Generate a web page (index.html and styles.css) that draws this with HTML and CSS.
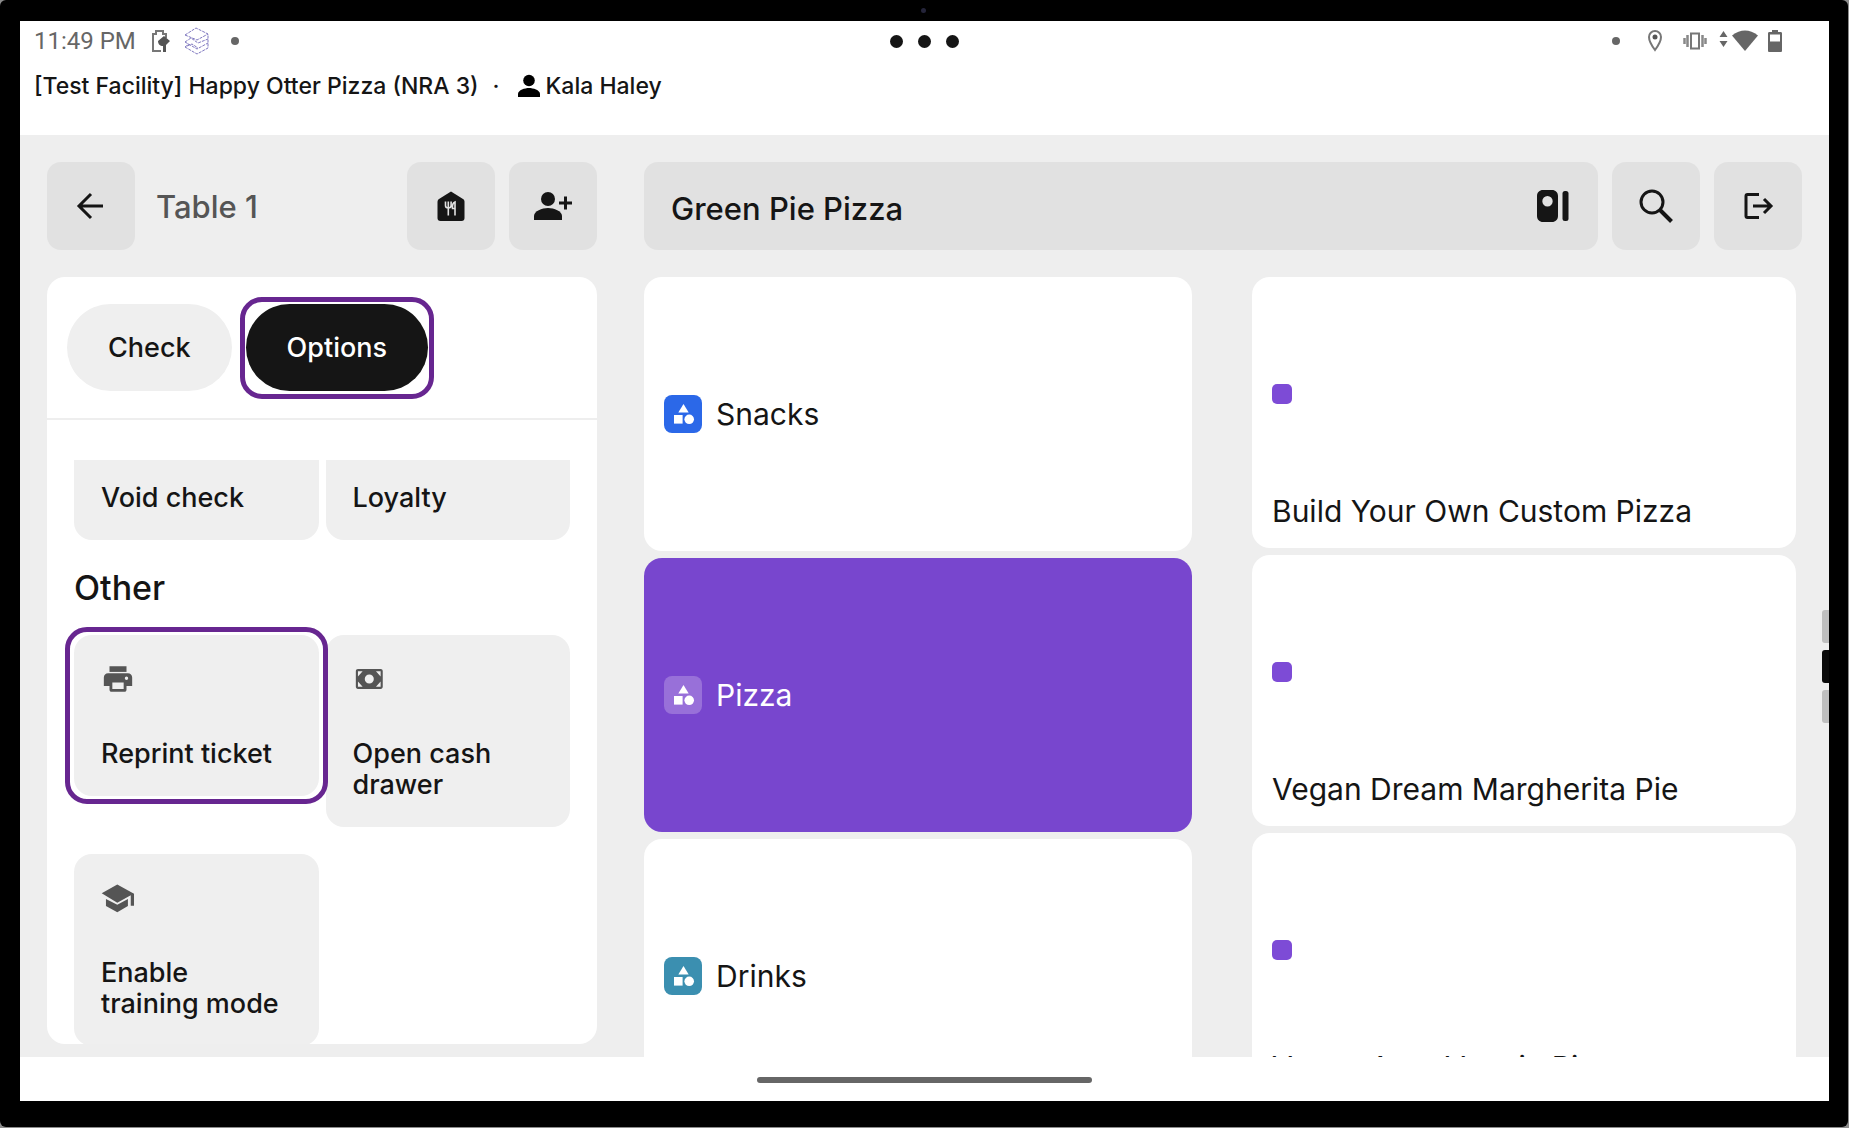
FILE: index.html
```html
<!DOCTYPE html>
<html lang="en">
<head>
    <meta charset="UTF-8">
    <meta name="viewport" content="width=device-width, initial-scale=1.0">
    <title>Table 1 - Green Pie Pizza</title>
    <link rel="stylesheet" href="styles.css">
</head>
<body>
    <!-- shared icon used by every category -->
    <svg class="sprite" aria-hidden="true">
        <symbol id="icon-shapes" viewBox="0 0 38 38">
            <path d="M19.5 9l5.2 8.6H14.3z"/>
            <rect x="10" y="20" width="8.6" height="8.6"/>
            <circle cx="25.2" cy="24.3" r="4.8"/>
        </symbol>
    </svg>

    <div class="device">
        <span class="camera"></span>
        <div class="screen">
            <div class="status-bar">
                <div class="status-left">
                    <span class="time">11:49 PM</span>
                    <svg class="status-battery" width="20" height="26" viewBox="0 0 20 26">
                        <path d="M11 23H3V6h3V3h7v3h3v4" fill="none" stroke="#777" stroke-width="2"/>
                        <path d="M14 8l6 5-4 4v7h-3v-6c-3 0-5-2-5-5z" fill="#555"/>
                    </svg>
                    <svg class="status-layers" width="26" height="28" viewBox="0 0 26 28">
                        <g fill="none" stroke="#7f78c0" stroke-width="1" stroke-dasharray="3 1">
                            <path d="M1 8L12 1l12 6v14l-11 6-12-7"/>
                            <path d="M1 8l12 5 11-6M1 15l6-4 7 5 10-4M1 15l12 7 11-6M3 19l5-2 6 4M1 20l4-3"/>
                        </g>
                    </svg>
                    <span class="dot"></span>
                </div>
                <div class="status-center">
                    <span></span><span></span><span></span>
                </div>
                <div class="status-right">
                    <span class="dot"></span>
                    <svg class="status-pin" width="16" height="24" viewBox="0 0 16 24">
                        <path d="M8 2a6 6 0 0 0-6 6c0 5 6 13 6 13s6-8 6-13a6 6 0 0 0-6-6z" fill="none" stroke="#777" stroke-width="2"/>
                        <circle cx="8" cy="8" r="2.500" fill="#555"/>
                    </svg>
                    <svg class="status-vibrate" width="24" height="24" viewBox="0 0 24 24">
                        <path d="M8 4.500h8v15H8z" fill="none" stroke="#777" stroke-width="2"/>
                        <path d="M4.500 6v12M1.500 9v6M19.500 6v12M22.500 9v6" stroke="#888" stroke-width="2.500"/>
                    </svg>
                    <svg class="status-wifi" width="40" height="24" viewBox="0 0 40 24" fill="#666">
                        <path d="M4.500 2L8.500 8h-8zM4.500 18l-4-6h8z"/>
                        <path d="M13 6.500q13-10 26 0L26 22z"/>
                    </svg>
                    <svg class="status-charge" width="14" height="24" viewBox="0 0 14 24">
                        <path d="M4 1h6v2h2.500c1 0 1.500.5 1.500 1.500v17c0 1-.5 1.500-1.500 1.500h-11C.5 23 0 22.500 0 21.500v-17C0 3.500.5 3 1.500 3H4z" fill="#666"/>
                        <path d="M2 5.500h10v7H2z" fill="#fff"/>
                    </svg>
                </div>
            </div>

            <div class="facility-bar">
                <span>[Test Facility] Happy Otter Pizza (NRA 3)</span>
                <span class="separator">·</span>
                <svg width="24" height="24" viewBox="0 0 24 24">
                    <circle cx="12" cy="6.500" r="5.800"/>
                    <path d="M1 23v-3c0-4 7-6 11-6s11 2 11 6v3z"/>
                </svg>
                <span>Kala Haley</span>
            </div>

            <div class="app">
                <aside class="sidebar">
                    <header class="toolbar">
                        <button type="button" class="icon-btn" aria-label="Back">
                            <svg width="34" height="34" viewBox="0 0 34 34" fill="none" stroke="#151515" stroke-width="3">
                                <path d="M29 17H6M17 5L5 17l12 12"/>
                            </svg>
                        </button>
                        <h1 class="table-name">Table 1</h1>
                        <button type="button" class="icon-btn" aria-label="Dine in">
                            <svg width="34" height="34" viewBox="0 0 34 34">
                                <path d="M17 2.500L29 10c1 .8 1.500 1.600 1.500 3v16c0 2-1 3-3 3h-21c-2 0-3-1-3-3V13c0-1.400.5-2.200 1.500-3z" fill="#151515"/>
                                <path d="M11.500 12.500v4c0 2 1 2.500 2.800 2.500s2.800-.5 2.800-2.500v-4M14.300 12.500v14M21 26.500V13c-2.500 1-2.800 3.500-2.500 6.500H21" fill="none" stroke="#e1e1e1" stroke-width="1.600"/>
                            </svg>
                        </button>
                        <button type="button" class="icon-btn" aria-label="Add guest">
                            <svg width="40" height="34" viewBox="0 0 40 34">
                                <circle cx="15" cy="10" r="7" fill="#151515"/>
                                <path d="M1 31v-4c0-5 8-8 14-8s14 3 14 8v4z" fill="#151515"/>
                                <path d="M32.500 7.500v13M26 14h13" stroke="#151515" stroke-width="3"/>
                            </svg>
                        </button>
                    </header>

                    <section class="panel">
                        <div class="tabs">
                            <button type="button" class="tab">Check</button>
                            <button type="button" class="tab active highlight">Options</button>
                        </div>
                        <div class="options">
                            <div class="options-scroll">
                                <div class="option-grid">
                                    <button type="button" class="option">
                                        <span class="option-icon"></span>
                                        Void check
                                    </button>
                                    <button type="button" class="option">
                                        <span class="option-icon"></span>
                                        Loyalty
                                    </button>
                                </div>
                                <h2 class="option-title">Other</h2>
                                <div class="option-grid">
                                    <button type="button" class="option highlight">
                                        <svg class="option-icon" viewBox="0 0 24 24">
                                            <path d="M6 3h12v4H6z"/>
                                            <path fill-rule="evenodd" d="M5 8h14c1.700 0 3 1.300 3 3v6h-4v2.500c0 .9-.6 1.500-1.500 1.500h-9c-.9 0-1.500-.6-1.500-1.500V17H2v-6c0-1.700 1.300-3 3-3zm3 6.500V19h8v-4.500zM18 10.300a1.200 1.200 0 1 0 0 2.400 1.200 1.200 0 0 0 0-2.400z"/>
                                        </svg>
                                        Reprint ticket
                                    </button>
                                    <button type="button" class="option">
                                        <svg class="option-icon" viewBox="0 0 24 24">
                                            <path fill-rule="evenodd" d="M3.500 5h16c.9 0 1.500.6 1.500 1.500v11c0 .9-.6 1.500-1.500 1.500h-16c-.9 0-1.500-.6-1.500-1.500v-11C2 5.600 2.600 5 3.500 5zM11.500 8.800a3.200 3.200 0 1 0 0 6.400 3.200 3.200 0 0 0 0-6.400zM3.500 6.500v3.800l3.300-3.800zM19.500 6.500h-3.300l3.300 3.800zM3.500 17.500h3.300l-3.300-3.800zM19.500 17.500v-3.800l-3.300 3.800z"/>
                                        </svg>
                                        Open cash drawer
                                    </button>
                                    <button type="button" class="option">
                                        <svg class="option-icon" viewBox="0 0 24 24">
                                            <path d="M3.500 12.700v5L11.500 22l7.500-4.300v-5l-7.500 4z"/>
                                            <path d="M11.500 2.500L.5 8.700l11 6.600 9.500-5.300V17.500h2.300V9z"/>
                                        </svg>
                                        Enable training mode
                                    </button>
                                </div>
                            </div>
                        </div>
                    </section>
                </aside>

                <main class="menu">
                    <header class="toolbar">
                        <button type="button" class="menu-select">
                            <span>Green Pie Pizza</span>
                            <svg width="34" height="34" viewBox="0 0 34 34" fill="#151515">
                                <path fill-rule="evenodd" d="M8 1h9c3.500 0 6 2.500 6 6v20c0 3.500-2.500 6-6 6H8c-3.500 0-6-2.500-6-6V7c0-3.500 2.500-6 6-6zm4.500 6a5.200 5.200 0 1 0 0 10.400 5.200 5.200 0 0 0 0-10.400z"/>
                                <rect x="27.500" y="2" width="6" height="30" rx="2.500"/>
                            </svg>
                        </button>
                        <button type="button" class="icon-btn" aria-label="Search">
                            <svg width="36" height="36" viewBox="0 0 36 36" fill="none" stroke="#151515">
                                <circle cx="14" cy="14" r="11" stroke-width="3"/>
                                <path d="M21.500 21.500L33.500 33.500" stroke-width="4"/>
                            </svg>
                        </button>
                        <button type="button" class="icon-btn" aria-label="Log out">
                            <svg width="34" height="34" viewBox="0 0 34 34" fill="none" stroke="#151515" stroke-width="3">
                                <path d="M18 5.500H6.500c-1 0-1.500.5-1.500 1.500v20c0 1 .5 1.500 1.500 1.500H18M12 17h17M23 10l7 7-7 7"/>
                            </svg>
                        </button>
                    </header>

                    <div class="menu-columns">
                        <div class="categories">
                            <button type="button" class="category">
                                <svg class="category-icon snacks"><use href="#icon-shapes"/></svg>
                                Snacks
                            </button>
                            <button type="button" class="category selected">
                                <svg class="category-icon pizza"><use href="#icon-shapes"/></svg>
                                Pizza
                            </button>
                            <button type="button" class="category">
                                <svg class="category-icon drinks"><use href="#icon-shapes"/></svg>
                                Drinks
                            </button>
                        </div>
                        <div class="items">
                            <button type="button" class="item">
                                <span class="swatch"></span>
                                Build Your Own Custom Pizza
                            </button>
                            <button type="button" class="item">
                                <span class="swatch"></span>
                                Vegan Dream Margherita Pie
                            </button>
                            <button type="button" class="item">
                                <span class="swatch"></span>
                                Vegan Aura Veggie Pie
                            </button>
                        </div>
                    </div>
                </main>
            </div>

            <div class="pager">
                <span></span><span class="current"></span><span></span>
            </div>
            <div class="nav-bar"><span class="nav-handle"></span></div>
        </div>
    </div>
</body>
</html>
```
FILE: styles.css
```css
* { box-sizing: border-box; }
body { margin: 0; padding: 0 1px 1px 0; height: 100vh; background: #8c8c8c; color: #151515; font-family: Inter, "Liberation Sans", sans-serif; }
button { border: none; padding: 0; font-family: inherit; color: inherit; text-align: left; cursor: pointer; }
svg { display: block; flex: none; }
.sprite { position: absolute; width: 0; height: 0; }

/* device frame */
.device { position: relative; height: 100%; padding: 21px 19px 26px 20px; background: #000; border-radius: 6px; }
.camera { position: absolute; top: 8px; left: calc(50% - 3px); width: 5px; height: 5px; border-radius: 50%; background: #24243a; }
.screen { position: relative; display: flex; flex-direction: column; height: 100%; background: #fff; overflow: hidden; }

/* status bar */
.status-bar { display: grid; grid-template-columns: 1fr auto 1fr; align-items: center; height: 40px; padding: 0 14px; font-family: Roboto, sans-serif; font-size: 24px; color: #666; }
.status-left, .status-right, .status-center { display: flex; align-items: center; }
.status-right { justify-content: flex-end; padding-right: 33px; }
.status-center { gap: 15px; }
.status-center span { width: 13px; height: 13px; border-radius: 50%; background: #151515; }
.dot { width: 8px; height: 8px; border-radius: 50%; background: #666; }
.status-battery { margin-left: 14px; }
.status-layers { margin: 0 21px 0 14px; }
.status-pin { margin-left: 27px; }
.status-vibrate { margin: 0 12px 0 20px; }
.status-charge { margin-left: 9px; }

.facility-bar { display: flex; align-items: center; height: 74px; padding: 0 14px 24px; font-size: 23px; font-weight: 500; color: #151515; }
.facility-bar svg { margin-right: 5px; }
.separator { margin: 0 17px 0 14px; }

/* app */
.app { flex: 1; min-height: 0; display: grid; grid-template-columns: 19fr 40fr; gap: 47px; padding: 27px 27px 0; background: #eee; }
.sidebar, .menu { display: flex; flex-direction: column; min-width: 0; min-height: 0; }
.sidebar { padding-bottom: 13px; }
.toolbar { display: flex; align-items: center; gap: 14px; height: 88px; margin-bottom: 27px; flex: none; }
.icon-btn { display: flex; align-items: center; justify-content: center; width: 88px; height: 88px; border-radius: 14px; background: #e1e1e1; flex: none; }
.table-name { flex: 1; margin: 0 0 0 7px; font-size: 31px; font-weight: 500; color: #555; }

.panel { flex: 1; min-height: 0; display: flex; flex-direction: column; background: #fff; border-radius: 18px; overflow: hidden; }
.tabs { display: flex; gap: 14px; padding: 27px 20px; border-bottom: 2px solid #eee; }
.tab { height: 87px; padding: 0 41px; border-radius: 44px; background: #efefef; font-size: 27px; font-weight: 500; }
.tab.active { background: #151515; color: #fff; }

/* purple callout ring around a control */
.highlight { position: relative; }
.highlight::after { content: ""; position: absolute; inset: -8px -9px; border: 5px solid #672690; border-radius: 22px; }
.tab.highlight::after { inset: -7px -6px -8px; }

.options { flex: 1; min-height: 0; padding: 40px 27px 0; }
.options-scroll { height: 100%; margin: 0 -27px; padding: 0 27px; display: flex; flex-direction: column; overflow: hidden; }
.options-scroll .option-grid:first-child { margin-top: -81px; }
.option-grid { display: grid; grid-template-columns: 1fr 1fr; align-items: start; gap: 27px 7px; }
.option { padding: 27px 34px 27px 27px; border-radius: 18px; background: #efefef; font-size: 27px; font-weight: 500; line-height: 31px; }
.option-icon { display: block; width: 34px; height: 34px; margin-bottom: 42px; fill: #555; }
.option-title { margin: 28px 0 27px; font-size: 34px; font-weight: 500; line-height: 40px; }

/* menu */
.menu-select { flex: 1; display: flex; align-items: center; justify-content: space-between; height: 88px; padding: 0 29px 0 27px; border-radius: 14px; background: #e1e1e1; font-size: 31px; font-weight: 500; }
.menu-select span { padding-top: 5px; }
.menu-columns { flex: 1; min-height: 0; display: grid; grid-template-columns: 137fr 136fr; gap: 60px; padding-right: 6px; overflow: hidden; }
.categories, .items { display: flex; flex-direction: column; gap: 7px; }
.category { display: flex; align-items: center; gap: 14px; height: 274px; padding: 0 20px; border-radius: 18px; background: #fff; font-size: 30px; flex: none; }
.category.selected { background: #7846ce; color: #fff; }
.category-icon { width: 38px; height: 38px; border-radius: 8px; fill: #fff; }
.snacks { background: #2b68e8; }
.pizza { background: #9870d9; }
.drinks { background: #3b8fb0; }
.item { display: flex; flex-direction: column; justify-content: flex-end; gap: 88px; height: 271px; padding: 0 20px 18px; border-radius: 18px; background: #fff; font-size: 30px; line-height: 38px; flex: none; }
.swatch { width: 20px; height: 20px; border-radius: 5px; background: #7d4bd6; }

.pager { position: absolute; top: 589px; right: 0; display: flex; flex-direction: column; gap: 7px; }
.pager span { width: 7px; height: 33px; border-radius: 3px 0 0 3px; background: #bebebe; }
.pager .current { background: #0a0a0a; }
.nav-bar { display: flex; align-items: center; justify-content: center; height: 44px; padding-top: 2px; flex: none; }
.nav-handle { width: 335px; height: 6px; border-radius: 3px; background: #666; }
```
